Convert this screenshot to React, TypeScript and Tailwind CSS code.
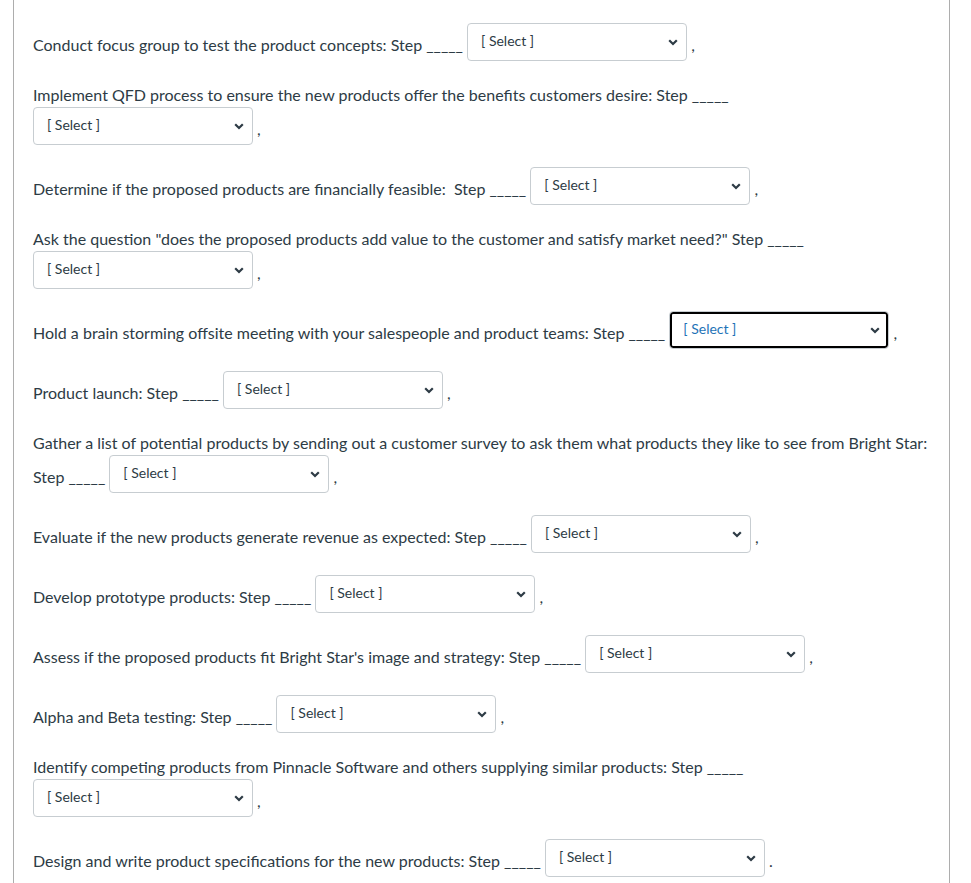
const items: { text: string; end?: string; focused?: boolean }[] = [
  { text: "Conduct focus group to test the product concepts: Step _____" },
  { text: "Implement QFD process to ensure the new products offer the benefits customers desire: Step _____" },
  { text: "Determine if the proposed products are financially feasible:\u00a0 Step _____" },
  { text: 'Ask the question "does the proposed products add value to the customer and satisfy market need?" Step _____' },
  { text: "Hold a brain storming offsite meeting with your salespeople and product teams: Step _____", focused: true },
  { text: "Product launch: Step _____" },
  { text: "Gather a list of potential products by sending out a customer survey to ask them what products they like to see from Bright Star: Step _____" },
  { text: "Evaluate if the new products generate revenue as expected: Step _____" },
  { text: "Develop prototype products: Step _____" },
  { text: "Assess if the proposed products fit Bright Star's image and strategy: Step _____" },
  { text: "Alpha and Beta testing: Step _____" },
  { text: "Identify competing products from Pinnacle Software and others supplying similar products: Step _____" },
  { text: "Design and write product specifications for the new products: Step _____", end: "." },
];

function FakeSelect({ focused }: { focused?: boolean }) {
  return (
    <span
      className={
        "inline-block align-[-20px] mb-[10px] w-[220px] h-[38px] border border-[#c7cdd1] rounded-[4px] overflow-hidden bg-white " +
        (focused ? "shadow-[inset_0_0_0_2px_#000000]" : "")
      }
    >
      <span className="flex h-full items-center justify-between pl-[13px] pr-[8px] pb-[2px]">
        <span
          className={
            "text-[14px] leading-5 " + (focused ? "text-[#1f73b7]" : "text-[#2d3b45]")
          }
        >
          [ Select ]
        </span>
        <svg width="10" height="7" viewBox="0 0 10 7" className="mt-[2px]">
          <path d="M1.2 1.2 L5 5 L8.8 1.2" fill="none" stroke="#2d3b45" strokeWidth="2.2" />
        </svg>
      </span>
    </span>
  );
}

export default function App() {
  return (
    <div className="min-h-[883px] bg-white font-['Lato',sans-serif] text-[16px] leading-6 text-[#2d3b45]">
      <div className="ml-[13px] w-[937px] min-h-[883px] border-x border-[#adadad] pl-[19px] pr-5 pt-[11px] pb-2">
        {items.map((it, i) => (
          <p key={i} className="my-3">
            {it.text} <FakeSelect focused={it.focused} /> {it.end ?? ","}
          </p>
        ))}
      </div>
    </div>
  );
}
